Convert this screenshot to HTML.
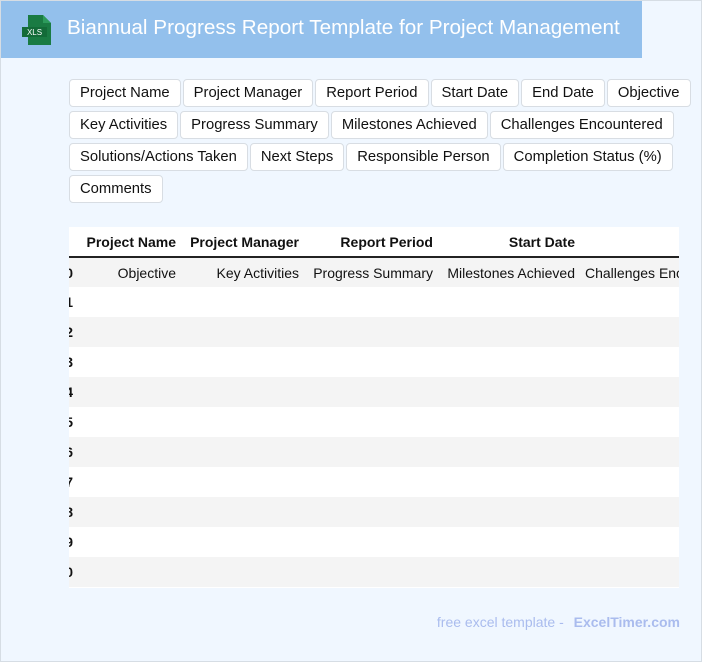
<!DOCTYPE html>
<html><head><style>
*{margin:0;padding:0;box-sizing:border-box}
body{width:702px;height:662px;background:#f0f7ff;font-family:"Liberation Sans",Arial,sans-serif;position:relative;overflow:hidden;border:1px solid #d6dde4}
.hdr{position:absolute;left:0;top:0;width:641px;height:57px;background:#93c0ec}
.hdr h1{position:absolute;left:66px;top:15px;font-size:20.7px;font-weight:normal;color:#fff;white-space:nowrap}
.tags{position:absolute;left:68px;top:78px;width:634px;display:flex;flex-wrap:wrap;gap:4px 2px}
.tag{height:28px;padding:0 10px;background:#fff;border:1px solid #d8dde3;border-radius:4px;font-size:14.8px;line-height:27px;color:#111}
.tbl{position:absolute;left:68px;top:226px;width:610px;height:361px;overflow:hidden;background:#fff}
table{border-collapse:collapse;table-layout:fixed;width:781px;position:absolute;left:-70px;top:0;font-size:14px;color:#111}
td,th{height:30px;text-align:right;padding:0 5px;white-space:nowrap;overflow:hidden}
td:first-child{padding-right:0;font-weight:bold}
th{font-weight:bold;border-bottom:2px solid #222}
tr.g td{background:#f4f4f4}
.ft{position:absolute;right:21px;top:613px;font-size:14px;color:#aabcee}
.ft b{margin-left:6px}
</style></head><body>
<div class="hdr">
<svg style="position:absolute;left:20px;top:13px" width="32" height="32" viewBox="0 0 32 32"><path d="M7 1h15l8 8v22H7z" fill="#1a7b43"/><path d="M22 1v8h8z" fill="#2d9b5c"/><rect x="1" y="13" width="25" height="10" fill="#136b38"/><text x="13.5" y="21" font-size="8" fill="#fff" text-anchor="middle" font-family="Liberation Sans">XLS</text></svg>
<h1>Biannual Progress Report Template for Project Management</h1>
</div>
<div class="tags">
<span class="tag">Project Name</span><span class="tag">Project Manager</span><span class="tag">Report Period</span><span class="tag">Start Date</span><span class="tag">End Date</span><span class="tag">Objective</span>
<span class="tag">Key Activities</span><span class="tag">Progress Summary</span><span class="tag">Milestones Achieved</span><span class="tag">Challenges Encountered</span>
<span class="tag">Solutions/Actions Taken</span><span class="tag">Next Steps</span><span class="tag">Responsible Person</span><span class="tag">Completion Status (%)</span>
<span class="tag">Comments</span>
</div>
<div class="tbl"><table>
<colgroup><col style="width:74px"><col style="width:108px"><col style="width:123px"><col style="width:134px"><col style="width:142px"><col style="width:200px"></colgroup>
<tr><th></th><th>Project Name</th><th>Project Manager</th><th>Report Period</th><th>Start Date</th><th></th></tr>
<tr class="g"><td>10</td><td>Objective</td><td>Key Activities</td><td>Progress Summary</td><td>Milestones Achieved</td><td style="text-align:left">Challenges Encountered</td></tr>
<tr><td>11</td><td></td><td></td><td></td><td></td><td></td></tr>
<tr class="g"><td>12</td><td></td><td></td><td></td><td></td><td></td></tr>
<tr><td>13</td><td></td><td></td><td></td><td></td><td></td></tr>
<tr class="g"><td>14</td><td></td><td></td><td></td><td></td><td></td></tr>
<tr><td>15</td><td></td><td></td><td></td><td></td><td></td></tr>
<tr class="g"><td>16</td><td></td><td></td><td></td><td></td><td></td></tr>
<tr><td>17</td><td></td><td></td><td></td><td></td><td></td></tr>
<tr class="g"><td>18</td><td></td><td></td><td></td><td></td><td></td></tr>
<tr><td>19</td><td></td><td></td><td></td><td></td><td></td></tr>
<tr class="g"><td>20</td><td></td><td></td><td></td><td></td><td></td></tr>
</table></div>
<div class="ft">free excel template - <b>ExcelTimer.com</b></div>
</body></html>
